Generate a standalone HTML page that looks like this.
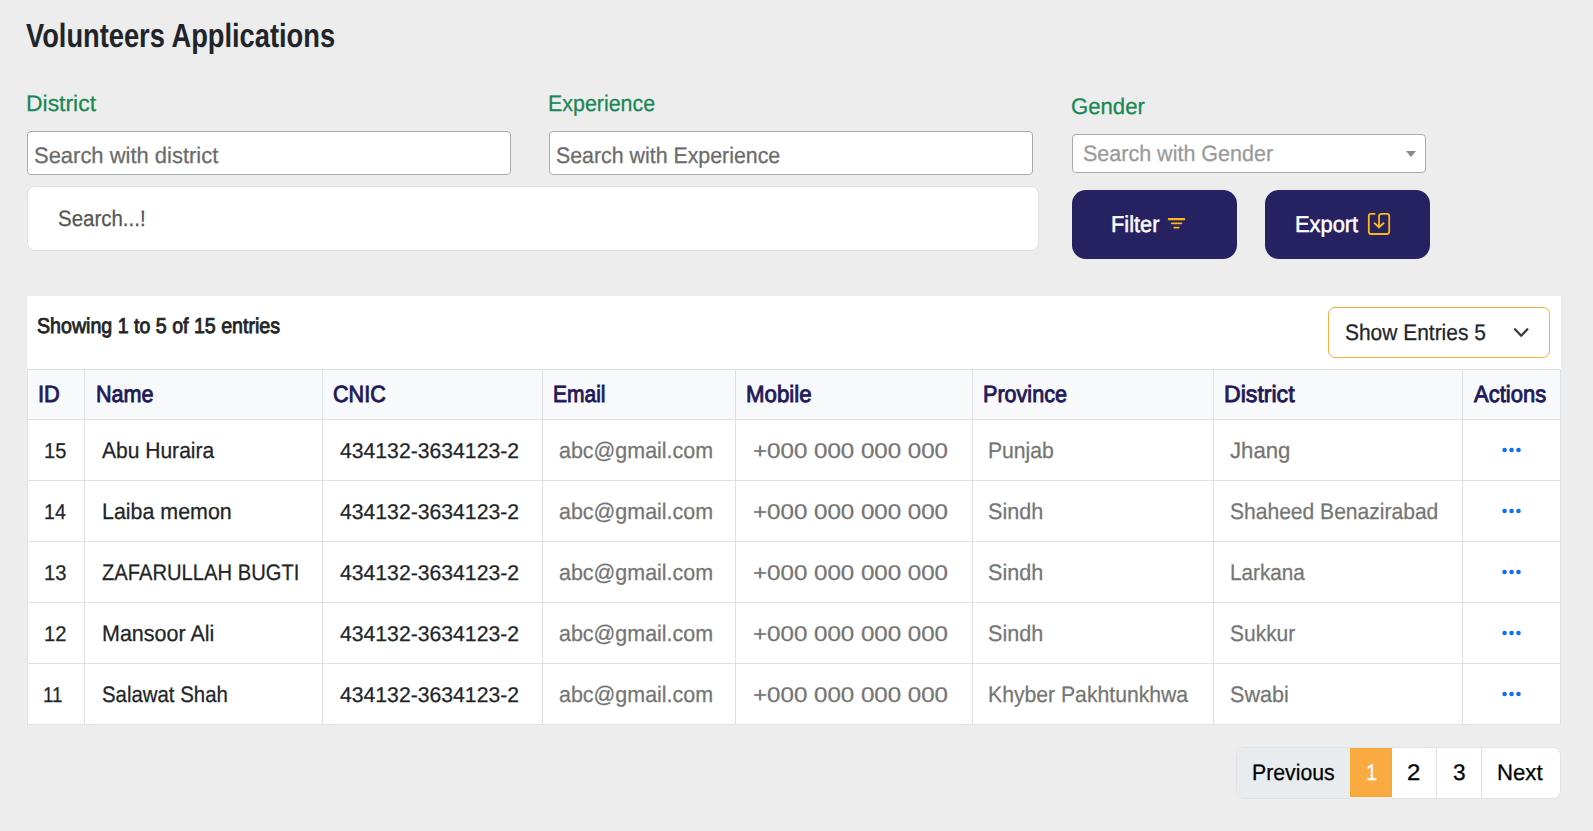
<!DOCTYPE html>
<html lang="en">
<head>
<meta charset="utf-8">
<title>Volunteers Applications</title>
<style>
html,body{margin:0;padding:0;}
body{width:1593px;height:831px;background:#ededed;position:relative;overflow:hidden;font-family:"Liberation Sans",sans-serif;}
.a{position:absolute;box-sizing:border-box;}
.t{position:absolute;white-space:pre;line-height:1;transform-origin:0 0;text-rendering:geometricPrecision;font-family:"Liberation Sans",sans-serif;}
</style>
</head>
<body>
<!-- inputs -->
<div class="a" style="left:27px;top:131px;width:484px;height:44px;background:#fff;border:1px solid #aaa;border-radius:4px;"></div>
<div class="a" style="left:549px;top:131px;width:484px;height:44px;background:#fff;border:1px solid #aaa;border-radius:4px;"></div>
<div class="a" style="left:1072px;top:134px;width:354px;height:39px;background:#fff;border:1px solid #aaa;border-radius:4px;"></div>
<div class="a" style="left:1406px;top:151px;width:0;height:0;border-left:5px solid transparent;border-right:5px solid transparent;border-top:6px solid #888;"></div>
<!-- search -->
<div class="a" style="left:27px;top:186px;width:1012px;height:65px;background:#fff;border:1px solid #dee2e6;border-radius:8px;"></div>
<!-- buttons -->
<div class="a" style="left:1072px;top:190px;width:165px;height:69px;background:#262262;border-radius:14px;"></div>
<div class="a" style="left:1265px;top:190px;width:165px;height:69px;background:#262262;border-radius:14px;"></div>
<svg class="a" style="left:1160px;top:200px;" width="50" height="50" viewBox="0 0 50 50"><g fill="#fcb814"><rect x="7.8" y="18" width="17.4" height="2.2" rx="1"/><rect x="10.8" y="22.4" width="11.5" height="1.8" rx="0.9"/><rect x="13.4" y="26.8" width="6.2" height="1.6" rx="0.8"/></g></svg>
<svg class="a" style="left:1355px;top:200px;" width="50" height="50" viewBox="0 0 50 50"><g fill="none" stroke="#fcb814" stroke-width="1.8" stroke-linecap="round" stroke-linejoin="round"><path d="M19.6 13.9 H16 a2.2 2.2 0 0 0 -2.2 2.2 V31.8 a2.2 2.2 0 0 0 2.2 2.2 H32 a2.2 2.2 0 0 0 2.2 -2.2 V16.1 a2.2 2.2 0 0 0 -2.2 -2.2 H26.2 a2.2 2.2 0 0 0 -2.2 2.2 V27.4"/><path d="M19 22.8 L24.05 27.2 L29.1 22.8" stroke-linecap="butt"/></g></svg>
<!-- card -->
<div class="a" style="left:27px;top:296px;width:1534px;height:429px;background:#fff;"></div>
<div class="a" style="left:1328px;top:307px;width:222px;height:51px;background:#fff;border:1px solid #f9ab3d;border-radius:7px;"></div>
<svg class="a" style="left:1510px;top:322px;" width="22" height="22" viewBox="0 0 22 22"><path d="M5 7.2 L11.2 13.8 L17.4 7.2" fill="none" stroke="#343a40" stroke-width="2.2" stroke-linecap="round" stroke-linejoin="round"/></svg>
<!-- table -->
<div class="a" style="left:27px;top:369px;width:1534px;height:51px;background:#f8f9fa;"></div>
<div class="a" style="left:27px;top:369px;width:1534px;height:1px;background:#dee2e6;"></div>
<div class="a" style="left:27px;top:419px;width:1534px;height:1px;background:#dee2e6;"></div>
<div class="a" style="left:27px;top:480px;width:1534px;height:1px;background:#dee2e6;"></div>
<div class="a" style="left:27px;top:541px;width:1534px;height:1px;background:#dee2e6;"></div>
<div class="a" style="left:27px;top:602px;width:1534px;height:1px;background:#dee2e6;"></div>
<div class="a" style="left:27px;top:663px;width:1534px;height:1px;background:#dee2e6;"></div>
<div class="a" style="left:27px;top:724px;width:1534px;height:1px;background:#dee2e6;"></div>
<div class="a" style="left:27px;top:369px;width:1px;height:356px;background:#dee2e6;"></div>
<div class="a" style="left:84px;top:369px;width:1px;height:356px;background:#dee2e6;"></div>
<div class="a" style="left:322px;top:369px;width:1px;height:356px;background:#dee2e6;"></div>
<div class="a" style="left:542px;top:369px;width:1px;height:356px;background:#dee2e6;"></div>
<div class="a" style="left:735px;top:369px;width:1px;height:356px;background:#dee2e6;"></div>
<div class="a" style="left:972px;top:369px;width:1px;height:356px;background:#dee2e6;"></div>
<div class="a" style="left:1213px;top:369px;width:1px;height:356px;background:#dee2e6;"></div>
<div class="a" style="left:1462px;top:369px;width:1px;height:356px;background:#dee2e6;"></div>
<div class="a" style="left:1560px;top:369px;width:1px;height:356px;background:#dee2e6;"></div>
<!-- dots -->
<svg class="a" style="left:1500px;top:440px;" width="24" height="270" viewBox="0 0 24 270"><g fill="#0d6efd"><circle cx="4.6" cy="10" r="2.3"/><circle cx="11.55" cy="10" r="2.3"/><circle cx="18.5" cy="10" r="2.3"/><circle cx="4.6" cy="71" r="2.3"/><circle cx="11.55" cy="71" r="2.3"/><circle cx="18.5" cy="71" r="2.3"/><circle cx="4.6" cy="132" r="2.3"/><circle cx="11.55" cy="132" r="2.3"/><circle cx="18.5" cy="132" r="2.3"/><circle cx="4.6" cy="193" r="2.3"/><circle cx="11.55" cy="193" r="2.3"/><circle cx="18.5" cy="193" r="2.3"/><circle cx="4.6" cy="254" r="2.3"/><circle cx="11.55" cy="254" r="2.3"/><circle cx="18.5" cy="254" r="2.3"/></g></svg>
<!-- pagination -->
<div class="a" style="left:1236px;top:747px;width:325px;height:52px;background:#fff;border:1px solid #dee2e6;border-radius:8px;overflow:hidden;">
<div class="a" style="left:0;top:0;width:114px;height:50px;background:#e9ecef;"></div>
<div class="a" style="left:113px;top:-1px;width:42px;height:50px;background:#f9ab42;border:1px solid #fba82e;"></div>
<div class="a" style="left:113px;top:49px;width:42px;height:1px;background:#e9eff8;"></div>
<div class="a" style="left:112px;top:0;width:1px;height:50px;background:#e6edf8;"></div>
<div class="a" style="left:199px;top:0;width:1px;height:50px;background:#dee2e6;"></div>
<div class="a" style="left:244px;top:0;width:1px;height:50px;background:#dee2e6;"></div>
</div>
<div class="a" style="left:1350px;top:798px;width:42px;height:1px;background:#ededed;"></div>

<span class="t" style="left:26.42px;top:20.00px;font-size:33.6px;color:#212529;transform:scaleX(0.8121);font-weight:700;">Volunteers Applications</span>
<span class="t" style="left:26.12px;top:92.75px;font-size:22.6px;color:#198754;transform:scaleX(1.0143);-webkit-text-stroke:0.25px #198754;">District</span>
<span class="t" style="left:548.29px;top:92.75px;font-size:22.6px;color:#198754;transform:scaleX(0.9476);-webkit-text-stroke:0.25px #198754;">Experience</span>
<span class="t" style="left:1071.23px;top:95.75px;font-size:22.6px;color:#198754;transform:scaleX(0.9795);-webkit-text-stroke:0.25px #198754;">Gender</span>
<span class="t" style="left:34.19px;top:144.75px;font-size:22.5px;color:#6b6b6b;transform:scaleX(0.9761);-webkit-text-stroke:0.25px #6b6b6b;">Search with district</span>
<span class="t" style="left:556.42px;top:144.75px;font-size:22.5px;color:#6b6b6b;transform:scaleX(0.9487);-webkit-text-stroke:0.25px #6b6b6b;">Search with Experience</span>
<span class="t" style="left:1083.10px;top:142.75px;font-size:22.3px;color:#999;transform:scaleX(0.9646);-webkit-text-stroke:0.25px #999;">Search with Gender</span>
<span class="t" style="left:57.66px;top:207.75px;font-size:22.3px;color:#555;transform:scaleX(0.9183);-webkit-text-stroke:0.25px #555;">Search...!</span>
<span class="t" style="left:1111.37px;top:212.75px;font-size:23px;color:#fff;transform:scaleX(0.9494);-webkit-text-stroke:0.5px #fff;">Filter</span>
<span class="t" style="left:1295.07px;top:212.75px;font-size:23px;color:#fff;transform:scaleX(0.9498);-webkit-text-stroke:0.5px #fff;">Export</span>
<span class="t" style="left:37.32px;top:316.47px;font-size:21.4px;color:#212529;transform:scaleX(0.9164);-webkit-text-stroke:0.85px #212529;">Showing 1 to 5 of 15 entries</span>
<span class="t" style="left:1344.94px;top:321.75px;font-size:22.5px;color:#212529;transform:scaleX(0.9307);-webkit-text-stroke:0.25px #212529;">Show Entries 5</span>
<span class="t" style="left:38.22px;top:383.47px;font-size:23.5px;color:#1f1a5a;transform:scaleX(0.9290);-webkit-text-stroke:0.9px #1f1a5a;">ID</span>
<span class="t" style="left:95.96px;top:383.47px;font-size:23.5px;color:#1f1a5a;transform:scaleX(0.9183);-webkit-text-stroke:0.9px #1f1a5a;">Name</span>
<span class="t" style="left:333.22px;top:383.47px;font-size:23.5px;color:#1f1a5a;transform:scaleX(0.9182);-webkit-text-stroke:0.9px #1f1a5a;">CNIC</span>
<span class="t" style="left:552.90px;top:383.47px;font-size:23.5px;color:#1f1a5a;transform:scaleX(0.8938);-webkit-text-stroke:0.9px #1f1a5a;">Email</span>
<span class="t" style="left:746.32px;top:383.47px;font-size:23.5px;color:#1f1a5a;transform:scaleX(0.9463);-webkit-text-stroke:0.9px #1f1a5a;">Mobile</span>
<span class="t" style="left:982.66px;top:383.47px;font-size:23.5px;color:#1f1a5a;transform:scaleX(0.9181);-webkit-text-stroke:0.9px #1f1a5a;">Province</span>
<span class="t" style="left:1223.57px;top:383.47px;font-size:23.5px;color:#1f1a5a;transform:scaleX(0.9833);-webkit-text-stroke:0.9px #1f1a5a;">District</span>
<span class="t" style="left:1474.23px;top:383.47px;font-size:23.5px;color:#1f1a5a;transform:scaleX(0.9360);-webkit-text-stroke:0.9px #1f1a5a;">Actions</span>
<span class="t" style="left:43.55px;top:440.76px;font-size:21.3px;color:#212529;transform:scaleX(0.9411);-webkit-text-stroke:0.25px #212529;">15</span>
<span class="t" style="left:101.90px;top:439.75px;font-size:22.5px;color:#212529;transform:scaleX(0.9344);-webkit-text-stroke:0.25px #212529;">Abu Huraira</span>
<span class="t" style="left:339.78px;top:440.76px;font-size:21.3px;color:#212529;transform:scaleX(0.9946);-webkit-text-stroke:0.25px #212529;">434132-3634123-2</span>
<span class="t" style="left:559.14px;top:439.75px;font-size:22.5px;color:#757575;transform:scaleX(0.9531);-webkit-text-stroke:0.25px #757575;">abc@gmail.com</span>
<span class="t" style="left:753.05px;top:440.76px;font-size:21.3px;color:#757575;transform:scaleX(1.1316);-webkit-text-stroke:0.25px #757575;">+000 000 000 000</span>
<span class="t" style="left:988.30px;top:439.75px;font-size:22.5px;color:#757575;transform:scaleX(0.9394);-webkit-text-stroke:0.25px #757575;">Punjab</span>
<span class="t" style="left:1230.00px;top:439.75px;font-size:22.5px;color:#757575;transform:scaleX(0.9854);-webkit-text-stroke:0.25px #757575;">Jhang</span>
<span class="t" style="left:43.58px;top:501.76px;font-size:21.3px;color:#212529;transform:scaleX(0.9216);-webkit-text-stroke:0.25px #212529;">14</span>
<span class="t" style="left:101.90px;top:500.75px;font-size:22.5px;color:#212529;transform:scaleX(0.9514);-webkit-text-stroke:0.25px #212529;">Laiba memon</span>
<span class="t" style="left:339.78px;top:501.76px;font-size:21.3px;color:#212529;transform:scaleX(0.9946);-webkit-text-stroke:0.25px #212529;">434132-3634123-2</span>
<span class="t" style="left:559.14px;top:500.75px;font-size:22.5px;color:#757575;transform:scaleX(0.9531);-webkit-text-stroke:0.25px #757575;">abc@gmail.com</span>
<span class="t" style="left:753.05px;top:501.76px;font-size:21.3px;color:#757575;transform:scaleX(1.1316);-webkit-text-stroke:0.25px #757575;">+000 000 000 000</span>
<span class="t" style="left:988.30px;top:500.75px;font-size:22.5px;color:#757575;transform:scaleX(0.9592);-webkit-text-stroke:0.25px #757575;">Sindh</span>
<span class="t" style="left:1230.00px;top:500.75px;font-size:22.5px;color:#757575;transform:scaleX(0.9354);-webkit-text-stroke:0.25px #757575;">Shaheed Benazirabad</span>
<span class="t" style="left:43.55px;top:562.76px;font-size:21.3px;color:#212529;transform:scaleX(0.9436);-webkit-text-stroke:0.25px #212529;">13</span>
<span class="t" style="left:101.90px;top:561.75px;font-size:22.5px;color:#212529;transform:scaleX(0.8968);-webkit-text-stroke:0.25px #212529;">ZAFARULLAH BUGTI</span>
<span class="t" style="left:339.78px;top:562.76px;font-size:21.3px;color:#212529;transform:scaleX(0.9946);-webkit-text-stroke:0.25px #212529;">434132-3634123-2</span>
<span class="t" style="left:559.14px;top:561.75px;font-size:22.5px;color:#757575;transform:scaleX(0.9531);-webkit-text-stroke:0.25px #757575;">abc@gmail.com</span>
<span class="t" style="left:753.05px;top:562.76px;font-size:21.3px;color:#757575;transform:scaleX(1.1316);-webkit-text-stroke:0.25px #757575;">+000 000 000 000</span>
<span class="t" style="left:988.30px;top:561.75px;font-size:22.5px;color:#757575;transform:scaleX(0.9592);-webkit-text-stroke:0.25px #757575;">Sindh</span>
<span class="t" style="left:1230.00px;top:561.75px;font-size:22.5px;color:#757575;transform:scaleX(0.9193);-webkit-text-stroke:0.25px #757575;">Larkana</span>
<span class="t" style="left:43.55px;top:623.76px;font-size:21.3px;color:#212529;transform:scaleX(0.9455);-webkit-text-stroke:0.25px #212529;">12</span>
<span class="t" style="left:101.90px;top:622.75px;font-size:22.5px;color:#212529;transform:scaleX(0.9555);-webkit-text-stroke:0.25px #212529;">Mansoor Ali</span>
<span class="t" style="left:339.78px;top:623.76px;font-size:21.3px;color:#212529;transform:scaleX(0.9946);-webkit-text-stroke:0.25px #212529;">434132-3634123-2</span>
<span class="t" style="left:559.14px;top:622.75px;font-size:22.5px;color:#757575;transform:scaleX(0.9531);-webkit-text-stroke:0.25px #757575;">abc@gmail.com</span>
<span class="t" style="left:753.05px;top:623.76px;font-size:21.3px;color:#757575;transform:scaleX(1.1316);-webkit-text-stroke:0.25px #757575;">+000 000 000 000</span>
<span class="t" style="left:988.30px;top:622.75px;font-size:22.5px;color:#757575;transform:scaleX(0.9592);-webkit-text-stroke:0.25px #757575;">Sindh</span>
<span class="t" style="left:1230.00px;top:622.75px;font-size:22.5px;color:#757575;transform:scaleX(0.9319);-webkit-text-stroke:0.25px #757575;">Sukkur</span>
<span class="t" style="left:42.95px;top:684.76px;font-size:21.3px;color:#212529;transform:scaleX(0.8800);-webkit-text-stroke:0.25px #212529;">11</span>
<span class="t" style="left:101.90px;top:683.75px;font-size:22.5px;color:#212529;transform:scaleX(0.9062);-webkit-text-stroke:0.25px #212529;">Salawat Shah</span>
<span class="t" style="left:339.78px;top:684.76px;font-size:21.3px;color:#212529;transform:scaleX(0.9946);-webkit-text-stroke:0.25px #212529;">434132-3634123-2</span>
<span class="t" style="left:559.14px;top:683.75px;font-size:22.5px;color:#757575;transform:scaleX(0.9531);-webkit-text-stroke:0.25px #757575;">abc@gmail.com</span>
<span class="t" style="left:753.05px;top:684.76px;font-size:21.3px;color:#757575;transform:scaleX(1.1316);-webkit-text-stroke:0.25px #757575;">+000 000 000 000</span>
<span class="t" style="left:988.30px;top:683.75px;font-size:22.5px;color:#757575;transform:scaleX(0.9413);-webkit-text-stroke:0.25px #757575;">Khyber Pakhtunkhwa</span>
<span class="t" style="left:1230.00px;top:683.75px;font-size:22.5px;color:#757575;transform:scaleX(0.9590);-webkit-text-stroke:0.25px #757575;">Swabi</span>
<span class="t" style="left:1252.40px;top:761.75px;font-size:22.5px;color:#000;transform:scaleX(0.9438);-webkit-text-stroke:0.25px #000;">Previous</span>
<span class="t" style="left:1366.16px;top:761.75px;font-size:22.5px;color:#fff;transform:scaleX(0.9000);-webkit-text-stroke:0.25px #fff;">1</span>
<span class="t" style="left:1406.95px;top:761.75px;font-size:22.5px;color:#000;transform:scaleX(1.0681);-webkit-text-stroke:0.25px #000;">2</span>
<span class="t" style="left:1452.63px;top:761.75px;font-size:22.5px;color:#000;transform:scaleX(1.0083);-webkit-text-stroke:0.25px #000;">3</span>
<span class="t" style="left:1497.33px;top:761.75px;font-size:22.5px;color:#000;transform:scaleX(0.9852);-webkit-text-stroke:0.25px #000;">Next</span>
</body>
</html>
